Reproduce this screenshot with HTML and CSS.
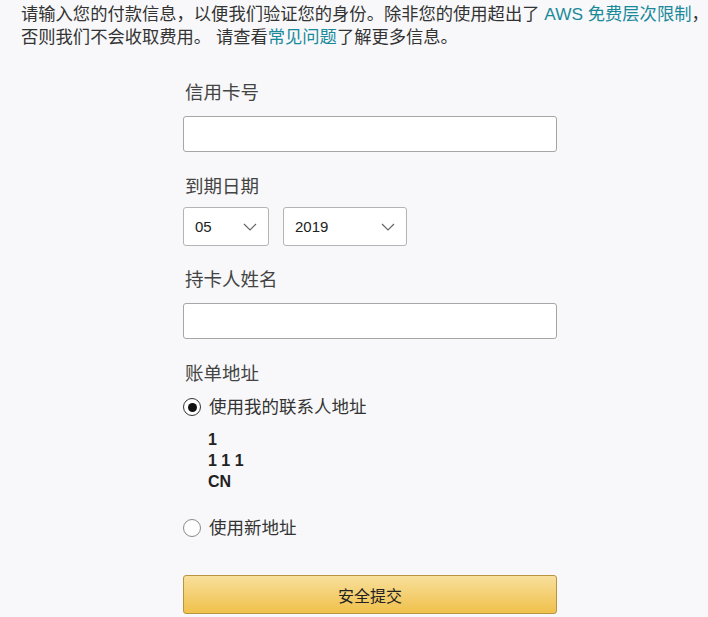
FILE: index.html
```html
<!DOCTYPE html>
<html lang="zh-CN">
<head>
    <meta charset="UTF-8">
    <title>付款信息</title>
    <link rel="stylesheet" href="styles.css">
</head>
<body>
    <p class="intro">请输入您的付款信息，以便我们验证您的身份。除非您的使用超出了 <a href="#">AWS 免费层次限制</a>，<br>否则我们不会收取费用。 请查看<a href="#">常见问题</a>了解更多信息。</p>

    <form class="pay-form">
        <label class="field-label">信用卡号</label>
        <div class="text-input"></div>

        <label class="field-label">到期日期</label>
        <div class="select-row">
            <div class="select month">
                <span>05</span>
                <svg width="14" height="8" viewBox="0 0 14 8"><path d="M1 1 L7 7 L13 1" fill="none" stroke="#666" stroke-width="1.2"/></svg>
            </div>
            <div class="select year">
                <span>2019</span>
                <svg width="14" height="8" viewBox="0 0 14 8"><path d="M1 1 L7 7 L13 1" fill="none" stroke="#666" stroke-width="1.2"/></svg>
            </div>
        </div>

        <label class="field-label">持卡人姓名</label>
        <div class="text-input"></div>

        <label class="field-label">账单地址</label>
        <div class="radio-row">
            <span class="radio checked"></span>
            <span>使用我的联系人地址</span>
        </div>
        <div class="address">
            <div>1</div>
            <div>1 1 1</div>
            <div>CN</div>
        </div>
        <div class="radio-row second">
            <span class="radio"></span>
            <span>使用新地址</span>
        </div>

        <div class="submit">安全提交</div>
    </form>
</body>
</html>
```

FILE: styles.css
```css
body {
    margin: 0;
    background: #f8f8fa;
    color: #333;
    font-family: "Liberation Sans", "Noto Sans CJK SC", sans-serif;
}

/* 顶部说明 */
.intro {
    margin: 3px 0 0;
    padding-left: 21px;
    font-size: 17.3px;
    line-height: 23px;
    white-space: nowrap;
    color: #333;
}
.intro a {
    color: #1a8a9a;
    text-decoration: none;
}

/* 表单 */
.pay-form {
    margin: 32px 0 0 183px;
    width: 374px;
    display: flex;
    flex-direction: column;
}

.field-label {
    font-size: 18.5px;
    line-height: 24px;
    color: #444;
    margin-bottom: 11px;
    padding-left: 2px;
}

.text-input {
    height: 34px;
    background: #fff;
    border: 1px solid #a6a6a6;
    border-radius: 3px;
    margin-bottom: 23px;
}

.select-row {
    display: flex;
    gap: 14px;
    margin-top: -3px;
    margin-bottom: 22px;
}
.select {
    height: 39px;
    background: #fff;
    border: 1px solid #b4b4b4;
    border-radius: 3px;
    display: flex;
    align-items: center;
    justify-content: space-between;
    padding: 0 11px;
    box-sizing: border-box;
    font-size: 15px;
    color: #222;
}
.select.month { width: 86px; }
.select.year { width: 124px; }

.radio-row {
    display: flex;
    align-items: center;
    gap: 8px;
    font-size: 17.5px;
    line-height: 24px;
    color: #333;
    margin-top: -2px;
}
.radio-row.second {
    margin-top: 24px;
}

.radio {
    width: 16px;
    height: 16px;
    border: 1px solid #8a8a8a;
    border-radius: 50%;
    background: #fff;
    display: flex;
    align-items: center;
    justify-content: center;
}
.radio.checked {
    border-color: #333;
}
.radio.checked::after {
    content: "";
    width: 9px;
    height: 9px;
    border-radius: 50%;
    background: #111;
}

.address {
    margin-top: 10px;
    padding-left: 25px;
    font-size: 16px;
    font-weight: bold;
    line-height: 21px;
    color: #222;
}

.submit {
    margin-top: 35px;
    height: 37px;
    border: 1px solid #b9953f;
    border-radius: 3px;
    background: linear-gradient(to bottom, #f8df9c, #f0c14b);
    display: flex;
    align-items: center;
    justify-content: center;
    font-size: 16px;
    color: #222;
}
```
